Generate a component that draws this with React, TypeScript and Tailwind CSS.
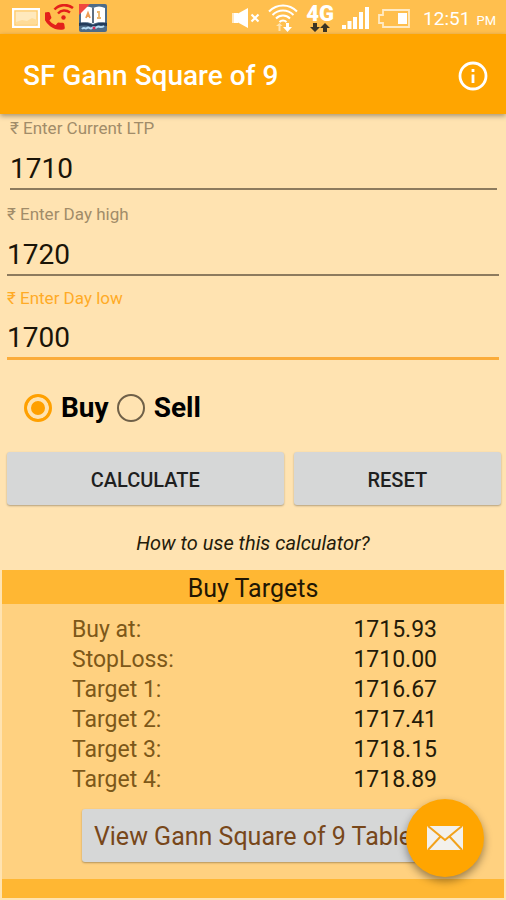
import React, { useState } from "react";

const targets = [
  { label: "Buy at:", value: "1715.93" },
  { label: "StopLoss:", value: "1710.00" },
  { label: "Target 1:", value: "1716.67" },
  { label: "Target 2:", value: "1717.41" },
  { label: "Target 3:", value: "1718.15" },
  { label: "Target 4:", value: "1718.89" },
];

const StatusBar: React.FC = () => (
  <div className="flex h-[34px] items-center justify-between bg-[#ffbf4e] pl-3 pr-[10px] pt-[2px] text-white">
    <div className="flex items-center gap-[5px]">
      {/* picture */}
      <svg width="28" height="20" viewBox="0 0 28 20">
        <rect x="1" y="1" width="26" height="18" fill="#ffe9bd" stroke="#fff" strokeWidth="2" />
        <rect x="3" y="3" width="22" height="14" fill="#ffe9bd" stroke="#ffc65c" strokeWidth="1" />
        <path d="M4 14l6-2 5 1 5-3 5 2v4H4z" fill="#ffdc98" />
      </svg>
      {/* wifi call */}
      <svg width="29" height="28" viewBox="0 0 29 28" fill="none">
        <path
          d="M6.600 10.800c1.400 2.800 3.800 5.100 6.600 6.600l2.200-2.200c.3-.3.7-.4 1-.2 1.100.4 2.300.6 3.600.6.6 0 1 .4 1 1V20c0 .6-.4 1-1 1C10.600 21 3 13.400 3 4c0-.6.4-1 1-1h3.500c.6 0 1 .4 1 1 0 1.300.2 2.500.6 3.600.1.300 0 .7-.2 1z"
          fill="#e3201b"
          stroke="#e3201b"
          strokeWidth="1.500"
          strokeLinejoin="round"
          transform="translate(-3 5) rotate(-8 12 12)"
        />
        <path d="M9.500 5.500C14 .5 22-.5 28 4" stroke="#e3201b" strokeWidth="2.600" />
        <path d="M13 9.500c3-3.500 8-4 12-1" stroke="#e3201b" strokeWidth="2.400" />
        <circle cx="18.500" cy="13.500" r="2.200" fill="#e3201b" />
      </svg>
      {/* dictionary */}
      <svg width="28" height="28" viewBox="0 0 28 28">
        <rect width="28" height="28" rx="2" fill="#4d6b88" />
        <path d="M2 4c4-2 8-2 12 0 4-2 8-2 12 0v15c-4-1-8-1-12 1-4-2-8-2-12-1z" fill="#fff" />
        <path d="M14 4v15" stroke="#2a3f57" strokeWidth="1.500" />
        <path d="M0 0h11L0 11z" fill="#f0473f" />
        <path d="M7 14l2-5 2 5M8 12h2" stroke="#ee9d55" strokeWidth="1.800" fill="none" />
        <path d="M18 8h2v6m-2 0h4" stroke="#ecb56b" strokeWidth="1.800" fill="none" />
        <path d="M0 19c5-1 9 0 14 2 5-2 9-3 14-2v3c-6-1-10 0-14 1-4-1-8-2-14-1z" fill="#213a5a" />
        <path d="M3 25c2-3 3 1 5-1s3 2 5 0 3 1 5-1 3 2 7-1" stroke="#b7dcf5" strokeWidth="2" fill="none" />
        <circle cx="15" cy="24" r="1.500" fill="#d92c55" />
      </svg>
    </div>

    <div className="flex items-center gap-2">
      {/* muted */}
      <svg width="28" height="22" viewBox="0 0 28 22">
        <path d="M1 6v10" stroke="#ffe9c4" strokeWidth="2" />
        <path d="M2 6h4v10H2zM6 6.500L16 1v20L6 15.500z" fill="#fff" />
        <path d="M19.500 7.500l7 7m0-7l-7 7" stroke="#fff" strokeWidth="2.200" />
      </svg>
      {/* wifi */}
      <svg width="30" height="28" viewBox="0 0 30 28" fill="none" stroke="#fff" strokeWidth="2">
        <path d="M1 7.500C9-.5 21-.5 29 7.500" />
        <path d="M4.500 11c6-6 15-6 21 0" />
        <path d="M8 14.500c4-4 10-4 14 0" />
        <path d="M11.500 18c2-2 5-2 7 0" />
        <path d="M18 19h3v4h3l-4.500 5L15 23h3z" fill="#fff" stroke="none" />
        <path d="M10.500 27v-5H8l3.500-3 3 3h-2v5z" fill="#ffe3ae" stroke="none" />
      </svg>
      <div className="flex flex-col items-center">
        <span className="text-[22px] font-black leading-[18px]">4G</span>
        <svg width="20" height="9" viewBox="0 0 20 9" fill="#3b3424">
          <path d="M3 0h4v4h3L5 9 0 4h3zM13 9h4V5h3l-5-5-5 5h3z" />
        </svg>
      </div>
      <svg width="27" height="22" viewBox="0 0 27 22" fill="#fff">
        <rect x="0" y="18" width="4" height="4" />
        <rect x="5.500" y="14" width="4" height="8" />
        <rect x="11" y="10" width="4" height="12" />
        <rect x="17" y="5" width="4" height="17" />
        <rect x="23" y="0" width="4" height="22" />
      </svg>
      <svg width="34" height="19" viewBox="0 0 34 19">
        <path d="M6 1h26v17H6v-4H2V6h4z" fill="none" stroke="#ffeac4" strokeWidth="1.800" />
        <rect x="21" y="4" width="9" height="11" fill="#fff" />
      </svg>
      <div className="flex items-baseline gap-[6px] pl-1 pt-[2px]">
        <span className="text-[19px] leading-6">12:51</span>
        <span className="text-[13px]">PM</span>
      </div>
    </div>
  </div>
);

type FieldProps = {
  id: string;
  label: string;
  value: string;
  onChange: (value: string) => void;
  active?: boolean;
};

const Field: React.FC<FieldProps> = ({ id, label, value, onChange, active }) => (
  <div>
    <label
      htmlFor={id}
      className={`block text-[17px] leading-5 ${active ? "text-[#ffab26]" : "text-[#a18c69]"}`}
    >
      {label}
    </label>
    <input
      id={id}
      type="text"
      inputMode="decimal"
      value={value}
      onChange={(e) => onChange(e.target.value)}
      className={`block h-[52px] w-full bg-transparent pt-[10px] text-[28px] text-[#1a1408] outline-none ${
        active ? "border-b-[3px] border-[#fbac3a]" : "border-b-2 border-[#8d7b5e]"
      }`}
    />
  </div>
);

const radioClass =
  "size-7 appearance-none rounded-full border-2 border-[#6f6048] checked:border-[3px] checked:border-[#ffa000] checked:bg-[#ffa000] checked:shadow-[inset_0_0_0_4px_#ffe3b1]";

const buttonClass =
  "h-[53px] rounded-[3px] bg-[#d6d7d7] pt-[2px] shadow-[0_1px_2px_rgba(0,0,0,0.3)]";

const App: React.FC = () => {
  const [ltp, setLtp] = useState("1710");
  const [high, setHigh] = useState("1720");
  const [low, setLow] = useState("1700");
  const [side, setSide] = useState("buy");

  const handleReset = () => {
    setLtp("");
    setHigh("");
    setLow("");
  };

  return (
    <div className="min-h-screen bg-[#ffe3b1] pb-[2px] font-['Roboto',sans-serif]">
      <StatusBar />
      <header className="relative flex h-20 items-center justify-between bg-[#ffa500] pl-[23px] pr-[18px] pt-1 text-white shadow-[0_2px_5px_rgba(0,0,0,0.35)]">
        <h1 className="text-[28px] font-medium">SF Gann Square of 9</h1>
        <button type="button" aria-label="Info">
          <svg width="30" height="30" viewBox="0 0 30 30">
            <circle cx="15" cy="15" r="13" fill="none" stroke="#fff" strokeWidth="2.800" />
            <rect x="13.600" y="13.500" width="2.800" height="8.500" fill="#fff" />
            <rect x="13.600" y="8" width="2.800" height="3" fill="#fff" />
          </svg>
        </button>
      </header>

      <main>
        <div className="pl-[10px] pr-[9px] pt-1">
          <Field id="ltp" label="₹ Enter Current LTP" value={ltp} onChange={setLtp} />
        </div>
        <div className="flex flex-col gap-3 px-[7px] pt-[14px]">
          <Field id="high" label="₹ Enter Day high" value={high} onChange={setHigh} />
          <Field id="low" label="₹ Enter Day low" value={low} onChange={setLow} active />
        </div>

        <div className="flex items-center gap-2 pl-6 pt-8 text-[28px] font-bold leading-8 text-black">
          <label className="flex items-center gap-[9px]">
            <input
              type="radio"
              name="side"
              checked={side === "buy"}
              onChange={() => setSide("buy")}
              className={radioClass}
            />
            Buy
          </label>
          <label className="flex items-center gap-[9px]">
            <input
              type="radio"
              name="side"
              checked={side === "sell"}
              onChange={() => setSide("sell")}
              className={radioClass}
            />
            Sell
          </label>
        </div>

        <div className="flex gap-[10px] pl-[7px] pr-[5px] pt-7 text-[20px] font-medium text-[#1f1f1f]">
          <button type="button" className={`flex-[4] ${buttonClass}`}>
            CALCULATE
          </button>
          <button type="button" onClick={handleReset} className={`flex-[3] ${buttonClass}`}>
            RESET
          </button>
        </div>

        <div className="pb-[15px] pt-[26px] text-center">
          <a href="#how-to" className="block text-[20px] italic leading-6 text-[#241b0a]">
            How to use this calculator?
          </a>
        </div>

        <section className="mx-[2px] bg-[#ffd180]">
          <h2 className="bg-[#ffb733] pt-1 text-center text-[25px] leading-[30px] text-[#211603]">
            Buy Targets
          </h2>
          <table className="mt-[11px] w-full text-left text-[23px] leading-[30px]">
            <tbody>
              {targets.map((row) => (
                <tr key={row.label}>
                  <th className="w-[70%] pl-[70px] font-normal text-[#7d5819]">{row.label}</th>
                  <td className="w-[30%] text-[#241a08]">{row.value}</td>
                </tr>
              ))}
            </tbody>
          </table>
          <div className="flex justify-center pb-[17px] pt-[14px]">
            <button
              type="button"
              className={`px-3 text-[25px] text-[#78471a] ${buttonClass}`}
            >
              View Gann Square of 9 Table
            </button>
          </div>
          <div className="h-[19px] bg-[#ffb733]" />
        </section>
      </main>

      <button
        type="button"
        aria-label="Send mail"
        className="fixed bottom-[23px] right-[22px] flex size-[78px] items-center justify-center rounded-full bg-[#ffa500] shadow-[0_4px_8px_rgba(0,0,0,0.4)]"
      >
        <svg width="36" height="24" viewBox="0 0 36 24">
          <rect width="36" height="24" rx="1" fill="#f3f1ec" />
          <path d="M1 0l17 14L35 0M1 24l12.500-13.500M35 24L22.500 10.500" fill="none" stroke="#f2a21b" strokeWidth="2" />
        </svg>
      </button>
    </div>
  );
};

export default App;
